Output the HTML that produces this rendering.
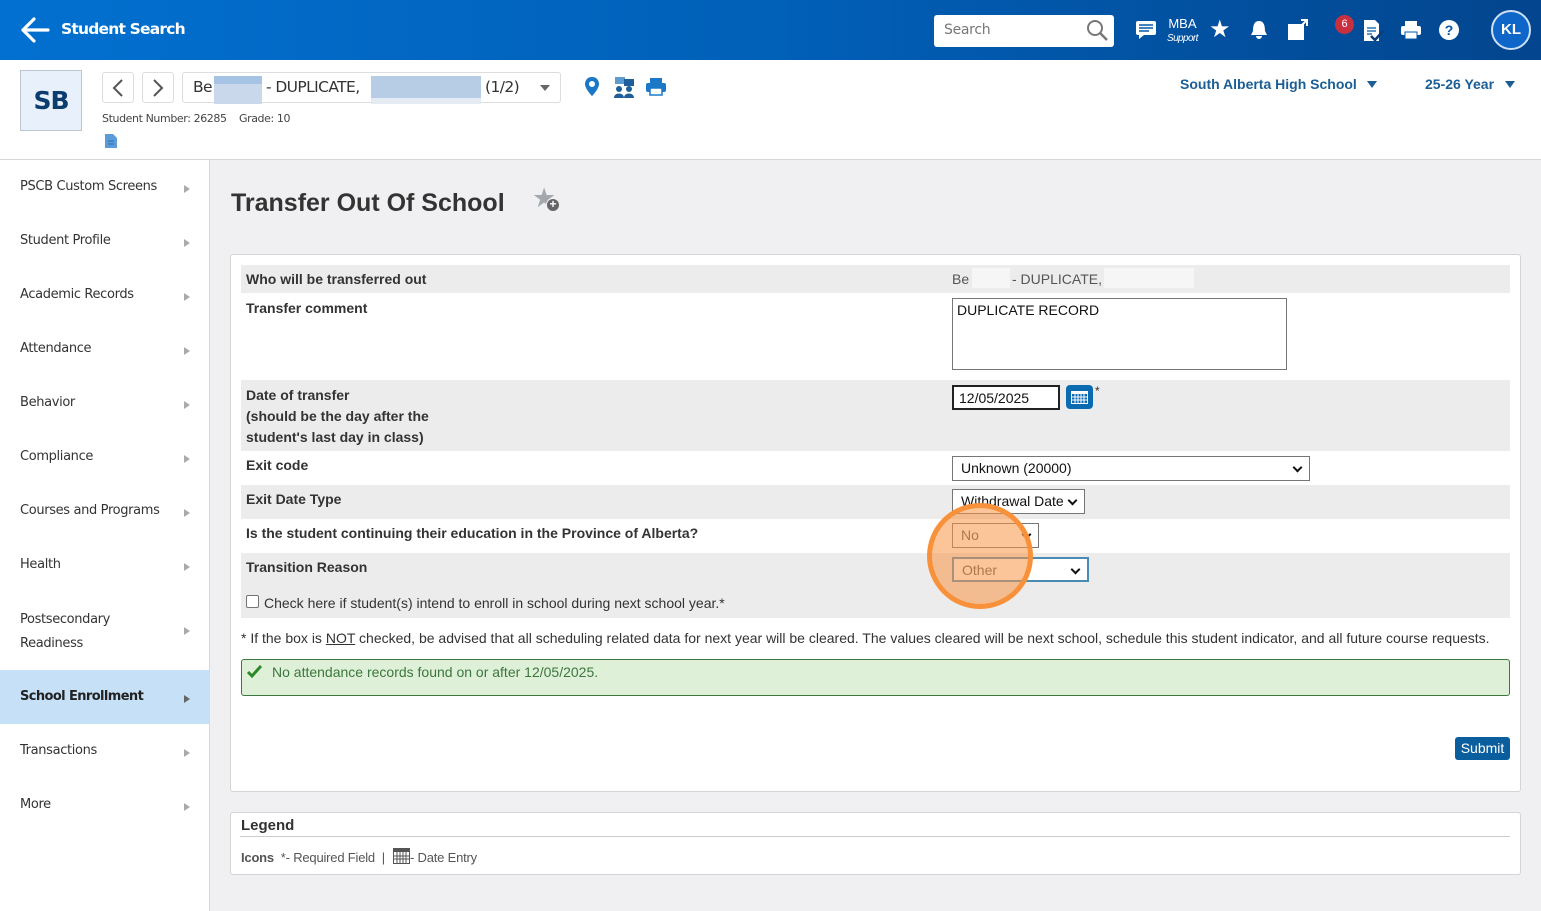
<!DOCTYPE html>
<html><head><meta charset="utf-8">
<style>
*{box-sizing:border-box;margin:0;padding:0}
body{width:1541px;height:911px;overflow:hidden;background:#f0f0f2;font-family:"Liberation Sans",Arial,sans-serif;position:relative}
.abs{position:absolute}
#top{left:0;top:0;width:1541px;height:60px;background:linear-gradient(90deg,#0270d0 0%,#0160b8 50%,#03458e 100%)}
#sub{left:0;top:60px;width:1541px;height:100px;background:#fff;border-bottom:1px solid #d6d6d6}
#side{left:0;top:160px;width:210px;height:751px;background:#fff;border-right:1px solid #d8d8d8}
.mi{position:absolute;left:20px;font-family:"DejaVu Sans",sans-serif;font-size:13px;color:#333;letter-spacing:-0.35px}
.ar{position:absolute;left:184px;width:0;height:0;border-left:6px solid #aaa;border-top:4px solid transparent;border-bottom:4px solid transparent}
.row{position:absolute;left:241px;width:1269px}
.g{background:#ececec}
.lb{position:absolute;left:5px;font-size:14px;font-weight:bold;color:#333}
.sel{position:absolute;background:#fff;border:1px solid #767676;font-size:14px;color:#111;padding-left:8px;line-height:22px;height:25px}
.sel:after{content:"";position:absolute;right:8px;top:7px;width:5px;height:5px;border-right:2px solid #111;border-bottom:2px solid #111;transform:rotate(45deg)}
</style></head><body>
<div id="top" class="abs"></div>
<svg class="abs" style="left:20px;top:16px" width="30" height="28" viewBox="0 0 30 28"><path d="M14 3 L3 14 L14 25 M3 14 H28" stroke="#fff" stroke-width="3.2" fill="none" stroke-linecap="round" stroke-linejoin="round"/></svg>
<div class="abs" style="left:61px;top:20px;color:#fff;font-family:'DejaVu Sans',sans-serif;font-weight:bold;font-size:15.5px;letter-spacing:-0.8px">Student Search</div>
<div class="abs" style="left:934px;top:15px;width:180px;height:32px;background:#fff;border-radius:3px"></div>
<div class="abs" style="left:944px;top:22px;font-family:'DejaVu Sans',sans-serif;font-size:14px;color:#777;letter-spacing:-0.3px">Search</div>
<svg class="abs" style="left:1086px;top:19px" width="24" height="24"><circle cx="9" cy="9" r="7" stroke="#777" stroke-width="2" fill="none"/><path d="M14 14 L21 21" stroke="#777" stroke-width="2.5"/></svg>
<svg class="abs" style="left:1135px;top:20px" width="22" height="20"><rect x="1" y="1" width="20" height="14" rx="2" fill="#fff"/><path d="M4 15 L4 19 L9 15Z" fill="#fff"/><path d="M4 5H18M4 8H18M4 11H14" stroke="#0558a8" stroke-width="1.4"/></svg>
<div class="abs" style="left:1167px;top:17px;color:#fff;font-size:13px;line-height:13px;text-align:center">MBA<br><span style="font-size:10px;font-style:italic;letter-spacing:-0.6px">Support</span></div>
<div class="abs" style="left:1209px;top:15px;color:#fff;font-size:24px">★</div>
<svg class="abs" style="left:1249px;top:19px" width="20" height="22"><path d="M10 2 C5 2 4 7 4 12 L2 16 H18 L16 12 C16 7 15 2 10 2Z M7 17 a3 3 0 0 0 6 0" fill="#fff"/></svg>
<svg class="abs" style="left:1286px;top:18px" width="24" height="24"><rect x="2" y="6" width="16" height="16" fill="#fff"/><path d="M10 13 L21 2 M15 2 H21 V8" stroke="#fff" stroke-width="2" fill="none"/></svg>
<div class="abs" style="left:1335px;top:15px;width:19px;height:19px;border-radius:50%;background:#c9303f;color:#fff;font-size:11px;text-align:center;line-height:19px">6</div>
<svg class="abs" style="left:1362px;top:19px" width="22" height="24"><path d="M2 1 H13 L17 5 V22 H2Z" fill="#fff"/><path d="M5 9H14M5 12H14M5 15H10" stroke="#0558a8" stroke-width="1.3"/><path d="M9 17 L13 21 L21 12" stroke="#0a3c7a" stroke-width="2.5" fill="none"/></svg>
<svg class="abs" style="left:1400px;top:20px" width="22" height="20"><rect x="5" y="1" width="12" height="5" fill="#fff"/><rect x="1" y="6" width="20" height="9" rx="2" fill="#fff"/><rect x="5" y="12" width="12" height="7" fill="#fff" stroke="#0558a8"/></svg>
<svg class="abs" style="left:1438px;top:19px" width="22" height="22"><circle cx="11" cy="11" r="10" fill="#fff"/><text x="11" y="16" font-size="14" font-weight="bold" text-anchor="middle" fill="#0558a8" font-family="Liberation Sans">?</text></svg>
<div class="abs" style="left:1491px;top:10px;width:40px;height:40px;border-radius:50%;background:#0d66c8;border:2px solid #cfe0f5;color:#fff;font-weight:bold;font-size:15px;text-align:center;line-height:36px">KL</div>

<div id="sub" class="abs"></div>
<div class="abs" style="left:20px;top:70px;width:62px;height:61px;background:#e8f0fb;border:1px solid #bcc6d2;color:#0b3d6e;font-family:'DejaVu Sans',sans-serif;font-weight:bold;font-size:25px;letter-spacing:-1px;text-align:center;line-height:59px">SB</div>
<div class="abs" style="left:102px;top:72px;width:32px;height:31px;border:1px solid #ddd;border-radius:3px;background:#fff"></div>
<svg class="abs" style="left:110px;top:78px" width="16" height="20"><path d="M12 2 L4 10 L12 18" stroke="#555" stroke-width="2" fill="none"/></svg>
<div class="abs" style="left:142px;top:72px;width:32px;height:31px;border:1px solid #ddd;border-radius:3px;background:#fff"></div>
<svg class="abs" style="left:150px;top:78px" width="16" height="20"><path d="M4 2 L12 10 L4 18" stroke="#555" stroke-width="2" fill="none"/></svg>
<div class="abs" style="left:182px;top:72px;width:379px;height:31px;border:1px solid #ddd;border-radius:3px;background:#fff"></div>
<div class="abs" style="left:193px;top:78px;font-family:'DejaVu Sans',sans-serif;font-size:15.5px;color:#333;letter-spacing:-0.6px">Be</div>
<div class="abs" style="left:214px;top:76px;width:48px;height:28px;background:linear-gradient(#a7c3e3 0 8px,#c9d8ea 8px)"></div>
<div class="abs" style="left:266px;top:78px;font-family:'DejaVu Sans',sans-serif;font-size:15.5px;color:#333;letter-spacing:-0.6px">- DUPLICATE, </div>
<div class="abs" style="left:371px;top:76px;width:110px;height:28px;background:linear-gradient(#b7cde6 0 22px,#e4ebf3 22px)"></div>
<div class="abs" style="left:485px;top:78px;font-family:'DejaVu Sans',sans-serif;font-size:15.5px;color:#333;letter-spacing:-0.6px">(1/2)</div>
<div class="abs" style="left:540px;top:85px;border-top:6px solid #666;border-left:5px solid transparent;border-right:5px solid transparent"></div>
<svg class="abs" style="left:583px;top:76px" width="18" height="22"><path d="M9 1 C4 1 2 5 2 8 C2 13 9 20 9 20 C9 20 16 13 16 8 C16 5 14 1 9 1Z" fill="#1b78c7"/><circle cx="9" cy="8" r="3" fill="#fff"/></svg>
<svg class="abs" style="left:613px;top:76px" width="22" height="22"><rect x="2" y="1" width="10" height="7" fill="#5d9bd0"/><rect x="11" y="3" width="10" height="7" fill="#1e5e9a"/><circle cx="6" cy="13" r="3" fill="#1e5e9a"/><circle cx="16" cy="13" r="3" fill="#1e5e9a"/><path d="M1 22 C1 16 11 16 11 22Z M11 22 C11 16 21 16 21 22Z" fill="#1e5e9a"/></svg>
<svg class="abs" style="left:645px;top:77px" width="22" height="20"><rect x="5" y="1" width="12" height="5" fill="#1b78c7"/><rect x="1" y="6" width="20" height="9" rx="2" fill="#1b78c7"/><rect x="5" y="11" width="12" height="7" fill="#fff" stroke="#1b78c7" stroke-width="1.5"/></svg>
<div class="abs" style="left:102px;top:112px;font-family:'DejaVu Sans',sans-serif;font-size:11px;color:#444;letter-spacing:-0.4px">Student Number: 26285 &nbsp;&nbsp; Grade: 10</div>
<svg class="abs" style="left:104px;top:133px" width="14" height="16"><path d="M1 1 H9 L13 5 V15 H1Z" fill="#5b9bd8"/><path d="M4 8H10M4 11H10" stroke="#2a6cb0" stroke-width="1"/></svg>
<div class="abs" style="left:1180px;top:76px;color:#1b5e95;font-weight:bold;font-size:14px">South Alberta High School</div>
<div class="abs" style="left:1367px;top:81px;border-top:7px solid #1b5e95;border-left:5px solid transparent;border-right:5px solid transparent"></div>
<div class="abs" style="left:1425px;top:76px;color:#1b5e95;font-weight:bold;font-size:14px">25-26 Year</div>
<div class="abs" style="left:1505px;top:81px;border-top:7px solid #1b5e95;border-left:5px solid transparent;border-right:5px solid transparent"></div>

<div id="side" class="abs"></div>
<div class="mi" style="top:179px">PSCB Custom Screens</div><div class="ar" style="top:185px"></div>
<div class="mi" style="top:233px">Student Profile</div><div class="ar" style="top:239px"></div>
<div class="mi" style="top:287px">Academic Records</div><div class="ar" style="top:293px"></div>
<div class="mi" style="top:341px">Attendance</div><div class="ar" style="top:347px"></div>
<div class="mi" style="top:395px">Behavior</div><div class="ar" style="top:401px"></div>
<div class="mi" style="top:449px">Compliance</div><div class="ar" style="top:455px"></div>
<div class="mi" style="top:503px">Courses and Programs</div><div class="ar" style="top:509px"></div>
<div class="mi" style="top:557px">Health</div><div class="ar" style="top:563px"></div>
<div class="mi" style="top:608px;line-height:24px">Postsecondary<br>Readiness</div><div class="ar" style="top:627px"></div>
<div class="abs" style="left:0;top:670px;width:209px;height:54px;background:#c6e0f8"></div>
<div class="mi" style="top:689px;color:#222;font-weight:bold;letter-spacing:-0.6px">School Enrollment</div><div class="ar" style="top:695px;border-left-color:#666"></div>
<div class="mi" style="top:743px">Transactions</div><div class="ar" style="top:749px"></div>
<div class="mi" style="top:797px">More</div><div class="ar" style="top:803px"></div>

<div class="abs" style="left:231px;top:189px;font-size:25px;font-weight:bold;color:#333">Transfer Out Of School</div>
<div class="abs" style="left:532px;top:183px;color:#a3a8ad;font-size:27px">★</div>
<div class="abs" style="left:546px;top:198px;width:14px;height:14px;border-radius:50%;background:#666;border:1.5px solid #f0f0f2;color:#fff;font-size:12px;line-height:11px;text-align:center;font-weight:bold">+</div>

<div class="abs" style="left:230px;top:254px;width:1291px;height:538px;background:#fff;border:1px solid #d4d4d4;border-radius:3px"></div>
<div class="row g" style="top:265px;height:28px"><div class="lb" style="top:6px">Who will be transferred out</div>
<div class="abs" style="left:711px;top:6px;font-size:14px;color:#555">Be</div><div class="abs" style="left:731px;top:3px;width:38px;height:20px;background:#f6f6f6"></div><div class="abs" style="left:771px;top:6px;font-size:14px;color:#555">- DUPLICATE,</div><div class="abs" style="left:863px;top:3px;width:90px;height:20px;background:#f6f6f6"></div></div>
<div class="row" style="top:293px;height:87px"><div class="lb" style="top:7px">Transfer comment</div>
<div class="abs" style="left:711px;top:5px;width:335px;height:72px;border:1px solid #767676;font-size:14px;padding:3px 4px;color:#111">DUPLICATE RECORD</div></div>
<div class="row g" style="top:380px;height:71px"><div class="lb" style="top:5px;line-height:21px">Date of transfer<br>(should be the day after the<br>student's last day in class)</div>
<div class="abs" style="left:711px;top:5px;width:108px;height:25px;border:2px solid #222;background:#fff;font-size:14px;padding:3px 5px;color:#111">12/05/2025</div>
<div class="abs" style="left:825px;top:5px;width:27px;height:24px;background:#0b6bb0;border-radius:4px"></div>
<svg class="abs" style="left:829px;top:10px" width="19" height="15"><rect x="1" y="1" width="17" height="13" fill="#fff"/><rect x="2" y="4" width="15" height="9" fill="#0b6bb0"/><path d="M5 4V13M8 4V13M11 4V13M14 4V13M2 7H17M2 10H17" stroke="#fff" stroke-width="1"/></svg>
<div class="abs" style="left:854px;top:4px;font-size:12px;color:#333">*</div></div>
<div class="row" style="top:451px;height:34px"><div class="lb" style="top:6px">Exit code</div>
<div class="sel" style="left:711px;top:5px;width:358px">Unknown (20000)</div></div>
<div class="row g" style="top:485px;height:34px"><div class="lb" style="top:6px">Exit Date Type</div>
<div class="sel" style="left:711px;top:4px;width:133px">Withdrawal Date</div></div>
<div class="row" style="top:519px;height:34px"><div class="lb" style="top:6px">Is the student continuing their education in the Province of Alberta?</div>
<div class="sel" style="left:711px;top:4px;width:87px;color:#555">No</div></div>
<div class="row g" style="top:553px;height:65px"><div class="lb" style="top:6px">Transition Reason</div>
<div class="sel" style="left:711px;top:4px;width:137px;border:2px solid #4a8bb5;color:#555">Other</div>
<div class="abs" style="left:5px;top:42px;width:13px;height:13px;border:1px solid #767676;border-radius:2px;background:#fff"></div>
<div class="abs" style="left:23px;top:42px;font-size:14px;color:#333">Check here if student(s) intend to enroll in school during next school year.*</div></div>
<div class="abs" style="left:927px;top:503px;width:106px;height:106px;border-radius:50%;border:5px solid #f8913a;background:rgba(248,150,70,0.55)"></div>
<div class="abs" style="left:241px;top:630px;font-size:14px;color:#333">* If the box is <u>NOT</u> checked, be advised that all scheduling related data for next year will be cleared. The values cleared will be next school, schedule this student indicator, and all future course requests.</div>
<div class="abs" style="left:241px;top:659px;width:1269px;height:37px;background:#dff0d8;border:1px solid #3c763d;border-radius:3px"></div>
<svg class="abs" style="left:246px;top:664px" width="17" height="15"><path d="M2 8 L6 12 L15 2" stroke="#2a8a2a" stroke-width="3" fill="none"/></svg>
<div class="abs" style="left:272px;top:664px;font-size:14px;color:#3c763d">No attendance records found on or after 12/05/2025.</div>
<div class="abs" style="left:1455px;top:737px;width:55px;height:23px;background:#0b5e9e;border-radius:3px;color:#fff;font-size:14px;text-align:center;line-height:22px">Submit</div>

<div class="abs" style="left:230px;top:812px;width:1291px;height:63px;background:#fff;border:1px solid #d4d4d4;border-radius:3px"></div>
<div class="abs" style="left:241px;top:817px;font-size:15px;font-weight:bold;color:#333">Legend</div>
<div class="abs" style="left:240px;top:836px;width:1270px;height:1px;background:#ccc"></div>
<div class="abs" style="left:241px;top:850px;font-size:13px;color:#555;letter-spacing:-0.2px"><b>Icons</b> &nbsp;*- Required Field &nbsp;| </div>
<svg class="abs" style="left:393px;top:848px" width="17" height="16"><rect x="0.5" y="0.5" width="16" height="15" fill="#fff" stroke="#555"/><rect x="1" y="1" width="15" height="3" fill="#555"/><path d="M4 4V15M7 4V15M10 4V15M13 4V15M1 8H16M1 11H16" stroke="#555" stroke-width="1"/></svg>
<div class="abs" style="left:410px;top:850px;font-size:13px;color:#555;letter-spacing:-0.2px">- Date Entry</div>
</body></html>
